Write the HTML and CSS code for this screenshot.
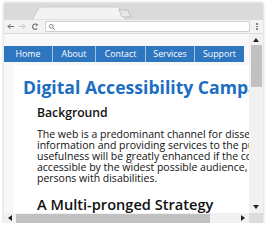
FILE: index.html
```
<!DOCTYPE html>
<html>
<head>
<meta charset="utf-8">
<link rel="stylesheet" href="styles.css">
</head>
<body>
<div class="window">
  <div class="tabstrip">
    <svg class="tabs" width="259" height="17" viewBox="0 0 259 17">
      <path d="M28 17 L35 5 Q36 4 38 4 L112 4 Q114 4 115 5 L122 17 Z" fill="#f3f3f3" stroke="#c4c4c4" stroke-width="0.8"/>
      <path d="M115 7 L124 7 L127 14 L118 14 Z" fill="#e6e6e6" stroke="#b8b8b8" stroke-width="0.8"/>
    </svg>
  </div>
  <div class="toolbar">
    <svg class="nav-icons" width="40" height="13" viewBox="0 0 40 13">
      <path d="M4 6.5 H10 M4 6.5 L6.5 4 M4 6.5 L6.5 9" stroke="#6a6a6a" stroke-width="1" fill="none"/>
      <path d="M15 6.5 H21 M21 6.5 L18.5 4 M21 6.5 L18.5 9" stroke="#c8c8c8" stroke-width="1" fill="none"/>
      <path d="M33.2 5 A2.6 2.6 0 1 0 33 8.5" stroke="#6a6a6a" stroke-width="1.1" fill="none"/>
      <path d="M32 3.6 L34 4.8 L32.4 6.4 Z" fill="#6a6a6a"/>
    </svg>
    <div class="address">
      <svg width="8" height="8" viewBox="0 0 8 8"><circle cx="3.3" cy="3.3" r="1.9" stroke="#777" stroke-width="0.9" fill="none"/><path d="M4.7 4.7 L6.6 6.6" stroke="#777" stroke-width="1"/></svg>
    </div>
    <div class="menu"><i></i><i></i><i></i></div>
  </div>
  <div class="viewport">
    <div class="page">
      <nav class="topnav">
        <a>Home</a><a>About</a><a>Contact</a><a>Services</a><a>Support</a>
      </nav>
      <main class="content">
        <h1>Digital Accessibility Campaign</h1>
        <h3>Background</h3>
        <p>The web is a predominant channel for disseminating information and providing services to the public. Its usefulness will be greatly enhanced if the content is accessible by the widest possible audience, including persons with disabilities.</p>
        <h2>A Multi-pronged Strategy</h2>
      </main>
    </div>
    <div class="vscroll">
      <span class="arrow up"></span>
      <span class="vthumb"></span>
      <span class="arrow down"></span>
    </div>
    <div class="hscroll">
      <span class="arrow left"></span>
      <span class="hthumb"></span>
      <span class="arrow right"></span>
    </div>
    <div class="corner"></div>
  </div>
</div>
</body>
</html>
```
FILE: styles.css
```
html, body {
  margin: 0;
  padding: 0;
  background: #ffffff;
}
body {
  padding: 3px 0 0 4px;
  font-family: "Open Sans", "Liberation Sans", sans-serif;
}
.window {
  width: 259px;
  height: 220px;
  display: flex;
  flex-direction: column;
  background: #f3f3f3;
  box-shadow: 0 0 3px rgba(0,0,0,0.25);
  overflow: hidden;
}
.tabstrip {
  height: 17px;
  background: #dadada;
  flex: none;
}
.tabs { display: block; }
.toolbar {
  height: 13px;
  flex: none;
  display: flex;
  align-items: center;
  background: #f3f3f3;
  border-bottom: 1px solid #dcdcdc;
}
.nav-icons { display: block; flex: none; }
.address {
  margin-left: 1px;
  width: 201px;
  height: 9px;
  background: #fff;
  border: 1px solid #cfcfcf;
  border-radius: 1px;
  display: flex;
  align-items: center;
  padding-left: 2px;
}
.address svg { display: block; }
.menu {
  margin-left: 6px;
  display: flex;
  flex-direction: column;
  gap: 1px;
}
.menu i {
  display: block;
  width: 1.5px;
  height: 1.5px;
  background: #888;
}
.viewport {
  flex: 1;
  display: grid;
  grid-template-columns: 1fr 14px;
  grid-template-rows: 1fr 10px;
  min-height: 0;
  background: #fff;
}
.page {
  overflow: hidden;
  background: #f8f8f8;
  padding-top: 12px;
  min-width: 0;
}
.topnav {
  display: grid;
  grid-template-columns: 49px 43px 50px 49px 49px;
  height: 16px;
  width: 240px;
  background: #2f76c1;
  overflow: hidden;
}
.topnav a {
  display: flex;
  align-items: center;
  justify-content: center;
  color: #fff;
  font-size: 8.8px;
  border-right: 1px solid rgba(255,255,255,0.55);
  white-space: nowrap;
}
.topnav a:last-child { border-right: none; }
.content {
  margin: 3px 0 0 10px;
  width: 330px;
  background: #fff;
  padding: 11px 0 0 9px;
  color: #111;
}
.content h1 {
  margin: 0;
  color: #1b6ec2;
  font-size: 17.6px;
  line-height: 22px;
  font-weight: 700;
  white-space: nowrap;
}
.content h3 {
  margin: 6px 0 0 14px;
  font-size: 12.2px;
  line-height: 17px;
  font-weight: 600;
  white-space: nowrap;
}
.content p {
  margin: 8px 0 0 14px;
  width: 278px;
  font-size: 10.5px;
  line-height: 11px;
}
.content h2 {
  margin: 11px 0 0 14px;
  font-size: 14.6px;
  line-height: 18px;
  font-weight: 600;
  white-space: nowrap;
}
.vscroll {
  background: #f1f1f1;
  display: flex;
  flex-direction: column;
  align-items: center;
}
.vthumb {
  width: 11px;
  height: 42px;
  background: #c1c1c1;
  margin-top: 3px;
}
.arrow {
  width: 0;
  height: 0;
  border: 3px solid transparent;
}
.arrow.up { border-bottom: 4px solid #222; border-top: none; margin-top: 4px; }
.arrow.down { border-top: 4px solid #222; border-bottom: none; margin-top: auto; margin-bottom: 4px; }
.hscroll {
  background: #f1f1f1;
  display: flex;
  align-items: center;
}
.arrow.left { border-right: 4px solid #222; border-left: none; margin-left: 4px; }
.arrow.right { border-left: 4px solid #222; border-right: none; margin-left: auto; margin-right: 4px; }
.hthumb {
  width: 194px;
  height: 9px;
  background: #c1c1c1;
  margin-left: 4px;
}
.corner { background: #dcdcdc; }
```
